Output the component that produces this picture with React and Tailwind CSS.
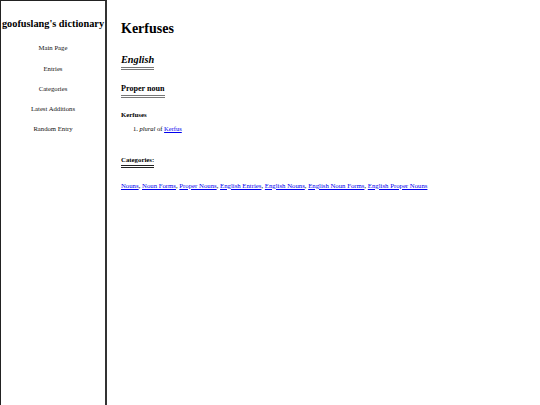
export default function App() {
  const nav = ['Main Page', 'Entries', 'Categories', 'Latest Additions', 'Random Entry']
  const cats = ['Nouns', 'Noun Forms', 'Proper Nouns', 'English Entries', 'English Nouns', 'English Noun Forms', 'English Proper Nouns']
  return (
    <div className="flex h-[405px] w-[540px] bg-white text-black font-['Liberation_Serif',serif]">
      {/* sidebar */}
      <aside className="w-[107px] shrink-0 border-l border-t border-r-2 border-l-[#222] border-t-[#222] border-r-[#333] flex flex-col items-center">
        <h1 className="mt-[18px] text-[10.3px] font-bold leading-none whitespace-nowrap">goofuslang's dictionary</h1>
        <nav className="mt-[15px] flex flex-col items-center gap-[13.3px] text-[6.7px] leading-[7px] text-[#111]">
          {nav.map(n => (
            <span key={n}>{n}</span>
          ))}
        </nav>
      </aside>

      {/* content */}
      <main className="flex-1 pl-[14px] pt-[22px]">
        <h1 className="text-[14px] font-bold leading-none">Kerfuses</h1>
        <h2 className="mt-[19px] inline-block text-[10.3px] font-bold italic leading-none pb-[2px] border-b-[3px] border-double border-[#777]">English</h2>
        <div />
        <h3 className="mt-[15px] inline-block text-[8.1px] font-bold leading-none pb-[2px] border-b-[3px] border-double border-[#777]">Proper noun</h3>
        <h4 className="mt-[14px] text-[6.8px] font-bold leading-none">Kerfuses</h4>
        <ol className="mt-[7px] pl-[12px] text-[6.5px] leading-none">
          <li>1. <i>plural</i> of <a className="text-[#0000ee] underline">Kerfus</a></li>
        </ol>
        <h3 className="mt-[24px] inline-block text-[6.8px] font-bold leading-none pb-[2px] border-b-[3px] border-double border-[#222]">Categories:</h3>
        <p className="mt-[14px] text-[6.76px] leading-none whitespace-nowrap">
          {cats.map((c, i) => (
            <span key={c}>
              <a className="text-[#0000ee] underline">{c}</a>
              {i < cats.length - 1 ? ', ' : ''}
            </span>
          ))}
        </p>
      </main>
    </div>
  )
}
